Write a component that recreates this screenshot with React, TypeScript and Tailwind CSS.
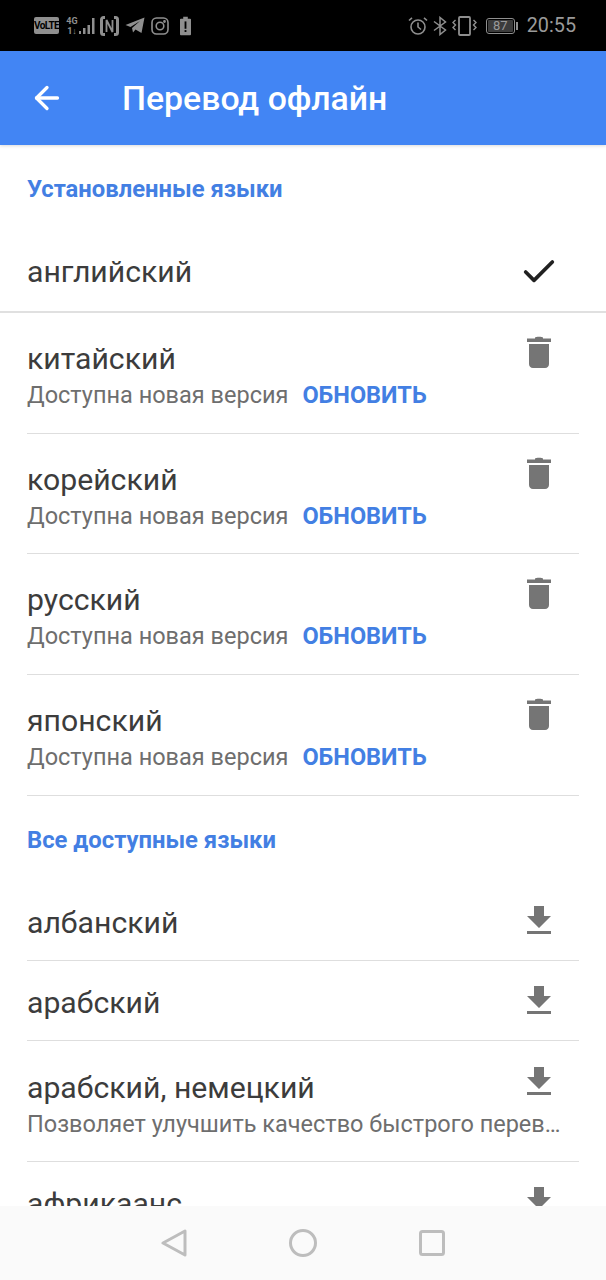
import { ArrowLeft, Check } from 'lucide-react';

const installed = ['китайский', 'корейский', 'русский', 'японский'];

function TrashIcon() {
  return (
    <svg width="24" height="32" viewBox="0 0 24 32" className="text-[#757575]" fill="currentColor">
      <path d="M8 1.5 C8.5 0.5 15.5 0.5 16 1.5 L16 2.5 L24 2.5 L24 6 L0 6 L0 2.5 L8 2.5 Z" />
      <path d="M2 8 L22 8 L22 28 C22 30 20.5 32 18 32 L6 32 C3.5 32 2 30 2 28 Z" />
    </svg>
  );
}

function DownloadIcon() {
  return (
    <svg width="24" height="28" viewBox="0 0 24 28" className="text-[#757575]" fill="currentColor">
      <path d="M7 0 L17 0 L17 10 L24 10 L12 22 L0 10 L7 10 Z" />
      <rect x="0" y="25" width="24" height="3" />
    </svg>
  );
}

function StatusLeft() {
  return (
    <div className="flex items-center text-[#8f8f8f]">
      <span className="ml-[34px] w-[25px] h-[17px] bg-[#8f8f8f] rounded-[2px] text-black text-[10px] font-bold leading-[17px] text-center tracking-[-0.6px]">VoLTE</span>
      <span className="ml-[7px] w-[12px] text-[9px] font-bold leading-[10px] text-center">4G<br />1↓</span>
      <svg width="19" height="18" viewBox="0 0 19 18" fill="currentColor" className="ml-[1px]">
        <rect x="0" y="14" width="2" height="3" />
        <rect x="4" y="11" width="2.5" height="6" />
        <rect x="8.5" y="8" width="2.5" height="9" />
        <rect x="13" y="1" width="2.5" height="16" />
      </svg>
      <svg width="19" height="20" viewBox="0 0 19 20" fill="none" stroke="currentColor" className="ml-[2px]">
        <path d="M5 1.5 H3.5 A2 2 0 0 0 1.5 3.5 V16.5 A2 2 0 0 0 3.5 18.5 H5" strokeWidth="3" />
        <path d="M14 1.5 H15.5 A2 2 0 0 1 17.5 3.5 V16.5 A2 2 0 0 1 15.5 18.5 H14" strokeWidth="3" />
        <path d="M6.5 16 V4 L12.5 16 V4" strokeWidth="1.8" />
      </svg>
      <svg width="20" height="17" viewBox="0 0 20 17" fill="currentColor" className="ml-[6px]">
        <path d="M19.5 0.5 L16.5 16 L10.5 12.5 L8 15.5 L7 11 L15 4 L5.5 10 L0.5 8 Z" />
      </svg>
      <svg width="18" height="18" viewBox="0 0 18 18" fill="none" stroke="currentColor" strokeWidth="1.6" className="ml-[6px]">
        <rect x="1" y="1" width="16" height="16" rx="4.5" />
        <circle cx="9" cy="9" r="3.8" />
        <circle cx="13.5" cy="4.5" r="0.6" fill="currentColor" />
      </svg>
      <svg width="11" height="20" viewBox="0 0 12 20" className="ml-[11px]">
        <path d="M3.5 0 H8.5 V2 H11 A1 1 0 0 1 12 3 V19 A1 1 0 0 1 11 20 H1 A1 1 0 0 1 0 19 V3 A1 1 0 0 1 1 2 H3.5 Z" fill="currentColor" />
        <rect x="5" y="5" width="2" height="8" fill="#000" />
        <rect x="5" y="14.5" width="2" height="2" fill="#000" />
      </svg>
    </div>
  );
}

function StatusRight() {
  return (
    <div className="flex items-center text-[#8f8f8f]">
      <svg width="20" height="20" viewBox="0 0 20 20" fill="none" stroke="currentColor" strokeWidth="1.6">
        <circle cx="10" cy="11" r="7" />
        <path d="M10 6.5 V11 L13 13.5" />
        <path d="M1 4.5 L4 1.8 M19 4.5 L16 1.8" />
      </svg>
      <svg width="16" height="20" viewBox="0 0 16 20" fill="none" stroke="currentColor" strokeWidth="1.5" className="ml-[4px]">
        <path d="M2 5.5 L13.5 14 L8 18.5 V1.5 L13.5 6 L2 14.5" />
      </svg>
      <svg width="25" height="20" viewBox="0 0 25 20" fill="none" stroke="currentColor" className="ml-[4px]">
        <rect x="7" y="1" width="11" height="18" rx="1" strokeWidth="1.8" />
        <path d="M3.5 4 L1 6.5 L3.5 9 L1 11.5 L3.5 14 M21.5 4 L24 6.5 L21.5 9 L24 11.5 L21.5 14" strokeWidth="1.4" />
      </svg>
      <div className="ml-[9px] w-[29px] h-[16px] border border-[#8f8f8f] rounded-[3px] p-[1px]">
        <div className="h-full w-[25px] bg-[#3c3c3c] rounded-[1px] text-[13px] leading-[12px] text-[#9a9a9a] text-center">87</div>
      </div>
      <div className="ml-[1px] w-[2px] h-[8px] bg-[#8f8f8f]" />
      <span className="ml-[9px] mr-[30px] text-[19.8px] leading-none text-[#9a9a9a]">20:55</span>
    </div>
  );
}

function SectionTitle({ children, className }: { children: string; className: string }) {
  return <div className={`${className} px-[27px] flex items-center text-[23.8px] font-bold text-[#437fe3]`}>{children}</div>;
}

function InstalledRow({ name }: { name: string }) {
  return (
    <div className="h-[120.7px] mx-[27px] border-b border-[#dedede] flex justify-between">
      <div>
        <div className="mt-[26px] text-[30.2px] leading-[40px] text-[#3c3c3c]">{name}</div>
        <div className="text-[23.5px] leading-[32px] text-[#6e6e6e]">
          Доступна новая версия<span className="ml-[14px] font-bold text-[#437fe3]">ОБНОВИТЬ</span>
        </div>
      </div>
      <div className="mt-[23px] mr-[28px]"><TrashIcon /></div>
    </div>
  );
}

function DownloadRow({ name, note, clip }: { name: string; note?: string; clip?: boolean }) {
  return (
    <div className={`${note ? 'h-[121px]' : 'h-[80px]'} mx-[27px] ${clip ? '' : 'border-b border-[#dedede]'} flex justify-between`}>
      <div className="min-w-0">
        <div className={`${note ? 'mt-[27px]' : 'mt-[22px]'} text-[30.2px] leading-[40px] text-[#3c3c3c]`}>{name}</div>
        {note && <div className="w-[535px] truncate text-[23.5px] leading-[32px] text-[#6e6e6e]">{note}</div>}
      </div>
      <div className={`${note ? 'mt-[26px]' : 'mt-[25px]'} mr-[28px] shrink-0`}><DownloadIcon /></div>
    </div>
  );
}

export default function App() {
  return (
    <div className="h-[1280px] flex flex-col overflow-hidden bg-white font-['Roboto',sans-serif]">
      {/* Status bar */}
      <div className="h-[51px] shrink-0 bg-black flex items-center justify-between">
        <StatusLeft />
        <StatusRight />
      </div>

      {/* Toolbar */}
      <div className="relative h-[94px] shrink-0 bg-[#4285f4] flex items-center shadow-[0_1px_3px_rgba(0,0,0,0.15)]">
        <ArrowLeft className="ml-[29px] text-white" size={36} strokeWidth={2.2} />
        <h1 className="ml-[57px] mt-[3px] text-[33.8px] font-medium text-white">Перевод офлайн</h1>
      </div>

      {/* List */}
      <div className="flex-1 min-h-0 overflow-hidden">
        <SectionTitle className="h-[87px] pt-[2px]">Установленные языки</SectionTitle>
        <div className="h-[81px] px-[27px] border-b-2 border-[#e0e0e0] flex items-center justify-between">
          <span className="text-[30.2px] text-[#3c3c3c]">английский</span>
          <Check className="mr-[20px] text-[#212121]" size={40} strokeWidth={2.2} />
        </div>
        {installed.map(n => <InstalledRow key={n} name={n} />)}
        <SectionTitle className="h-[85.2px] pt-[4px]">Все доступные языки</SectionTitle>
        <DownloadRow name="албанский" />
        <DownloadRow name="арабский" />
        <DownloadRow name="арабский, немецкий" note="Позволяет улучшить качество быстрого перевода" />
        <DownloadRow name="африкаанс" clip />
      </div>

      {/* Nav bar */}
      <div className="h-[74px] shrink-0 bg-[#fafafa] flex items-center justify-center text-[#bdbdbd]">
        <svg width="26" height="28" viewBox="0 0 26 28" fill="none" stroke="currentColor" strokeWidth="3" strokeLinejoin="round" className="mr-[102px]">
          <path d="M24 2 V26 L2 14 Z" />
        </svg>
        <svg width="28" height="28" viewBox="0 0 28 28" fill="none" stroke="currentColor" strokeWidth="3" className="mr-[102px]">
          <circle cx="14" cy="14" r="12.5" />
        </svg>
        <svg width="26" height="26" viewBox="0 0 26 26" fill="none" stroke="currentColor" strokeWidth="3">
          <rect x="1.5" y="1.5" width="23" height="23" rx="2" />
        </svg>
      </div>
    </div>
  );
}
